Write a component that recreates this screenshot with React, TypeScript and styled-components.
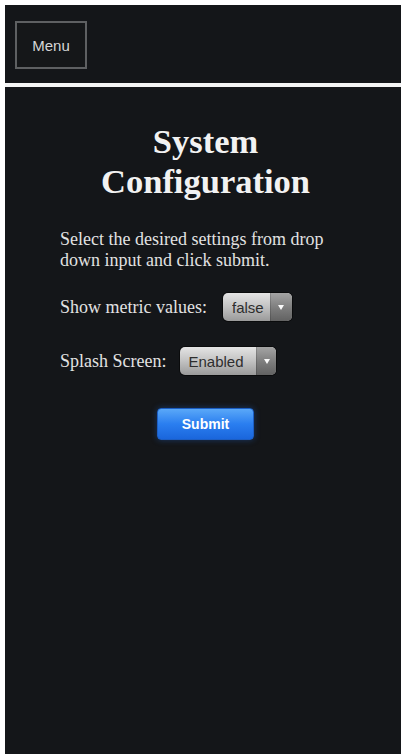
import React, { useState } from 'react';
import styled, { createGlobalStyle } from 'styled-components';

const GlobalStyle = createGlobalStyle`
  html, body {
    margin: 0;
    padding: 0;
    background: #ffffff;
  }
  * {
    box-sizing: border-box;
  }
`;

const App: React.FC = () => {
  const [metric, setMetric] = useState('false');
  const [splash, setSplash] = useState('Enabled');

  return (
    <>
      <GlobalStyle />
      <Page>
        <Header>
          <MenuButton type="button">Menu</MenuButton>
        </Header>

        <Main>
          <Title>
            System
            <br />
            Configuration
          </Title>

          <Intro>Select the desired settings from drop down input and click submit.</Intro>

          <Form onSubmit={(e: React.FormEvent) => e.preventDefault()}>
            <Row>
              <Label htmlFor="metric">Show metric values:</Label>
              <Dropdown>
                <Select
                  id="metric"
                  $width={47}
                  $pad={9}
                  value={metric}
                  onChange={(e: React.ChangeEvent<HTMLSelectElement>) => setMetric(e.target.value)}
                >
                  <option value="false">false</option>
                  <option value="true">true</option>
                </Select>
                <Arrow $width={22} />
              </Dropdown>
            </Row>

            <Row $top={26} $gap={14}>
              <Label htmlFor="splash">Splash Screen:</Label>
              <Dropdown>
                <Select
                  id="splash"
                  $width={76}
                  $pad={8}
                  value={splash}
                  onChange={(e: React.ChangeEvent<HTMLSelectElement>) => setSplash(e.target.value)}
                >
                  <option value="Enabled">Enabled</option>
                  <option value="Disabled">Disabled</option>
                </Select>
                <Arrow $width={20} />
              </Dropdown>
            </Row>

            <SubmitButton type="submit">Submit</SubmitButton>
          </Form>
        </Main>
      </Page>
    </>
  );
};

export default App;

const Page = styled.div`
  display: flex;
  flex-direction: column;
  min-height: 754px;
  padding: 5px 0 0 5px;
  background: #ffffff;
`;

const Header = styled.header`
  display: flex;
  align-items: flex-start;
  height: 82px;
  padding: 16px 0 0 10px;
  background: #141619;
  border-bottom: 4px solid #f4f4f4;
`;

const MenuButton = styled.button`
  width: 72px;
  height: 48px;
  padding: 0;
  background: #151719;
  border: 2px solid #5e6062;
  color: #d6d6d6;
  font-family: 'Liberation Sans', Arial, sans-serif;
  font-size: 15px;
  cursor: pointer;
`;

const Main = styled.main`
  flex: 1;
  display: flex;
  flex-direction: column;
  padding: 34px 50px 0 55px;
  background: #141619;
`;

const Title = styled.h1`
  margin: 0 0 28px;
  font-family: 'Liberation Serif', 'Times New Roman', serif;
  font-weight: 700;
  font-size: 34.5px;
  line-height: 40px;
  color: #f2f2f2;
  text-align: center;
`;

const Intro = styled.p`
  margin: 0;
  font-family: 'Liberation Serif', 'Times New Roman', serif;
  font-size: 18px;
  line-height: 21px;
  color: #e2e2e2;
`;

const Form = styled.form`
  display: flex;
  flex-direction: column;
  padding-top: 22px;
`;

const Row = styled.div<{ $top?: number; $gap?: number }>`
  display: flex;
  align-items: center;
  gap: ${(p) => p.$gap ?? 16}px;
  margin-top: ${(p) => p.$top ?? 0}px;
`;

const Label = styled.label`
  font-family: 'Liberation Serif', 'Times New Roman', serif;
  font-size: 18px;
  color: #e2e2e2;
`;

const Dropdown = styled.span`
  display: inline-flex;
  height: 28px;
  border-radius: 5px;
  overflow: hidden;
  background: linear-gradient(#e4e4e4, #c2c2c2 50%, #9a9a9a);
  box-shadow: 0 0 0 1px rgba(0, 0, 0, 0.5);
`;

const Select = styled.select<{ $width: number; $pad: number }>`
  appearance: none;
  width: ${(p) => p.$width}px;
  height: 100%;
  margin: 0;
  padding: 0 0 0 ${(p) => p.$pad}px;
  border: none;
  background: transparent;
  font-family: 'Liberation Sans', Arial, sans-serif;
  font-size: 15px;
  color: #2e2e2e;
  outline: none;
`;

const Arrow = styled.span<{ $width: number }>`
  display: flex;
  align-items: center;
  justify-content: center;
  width: ${(p) => p.$width}px;
  height: 100%;
  background: linear-gradient(#a4a4a4, #7c7c7c 55%, #626262);
  border-left: 1px solid rgba(0, 0, 0, 0.15);

  &::after {
    content: '';
    border-left: 3px solid transparent;
    border-right: 3px solid transparent;
    border-top: 5px solid #fafafa;
  }
`;

const SubmitButton = styled.button`
  align-self: center;
  width: 97px;
  height: 32px;
  margin-top: 33px;
  border: 1px solid #1c5ec4;
  border-radius: 4px;
  background: linear-gradient(#5aa8f8, #2a7ef0 50%, #1a66dc);
  box-shadow: 0 0 6px rgba(40, 120, 240, 0.35);
  color: #ffffff;
  font-family: 'Liberation Sans', Arial, sans-serif;
  font-weight: 700;
  font-size: 14px;
  cursor: pointer;
`;
